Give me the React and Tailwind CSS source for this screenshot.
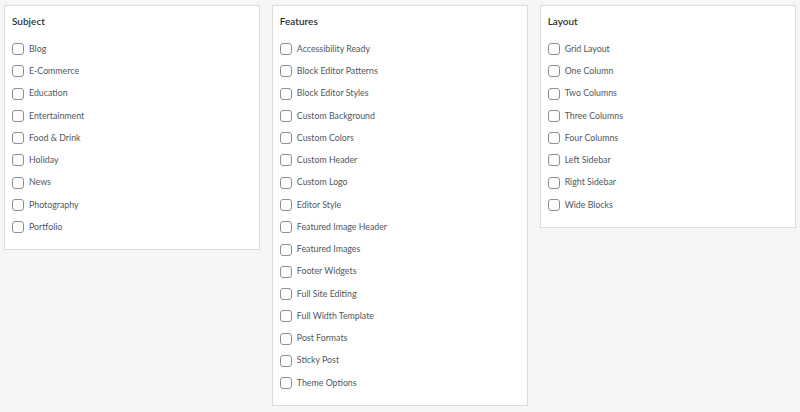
import React from "react";

const groups = [
  { title: "Subject", items: ["Blog", "E-Commerce", "Education", "Entertainment", "Food & Drink", "Holiday", "News", "Photography", "Portfolio"] },
  { title: "Features", items: ["Accessibility Ready", "Block Editor Patterns", "Block Editor Styles", "Custom Background", "Custom Colors", "Custom Header", "Custom Logo", "Editor Style", "Featured Image Header", "Featured Images", "Footer Widgets", "Full Site Editing", "Full Width Template", "Post Formats", "Sticky Post", "Theme Options"] },
  { title: "Layout", items: ["Grid Layout", "One Column", "Two Columns", "Three Columns", "Four Columns", "Left Sidebar", "Right Sidebar", "Wide Blocks"] },
];

export default function App() {
  return (
    <div className="w-[800px] h-[412px] bg-[#f6f6f6] px-[4px] pt-[5px] grid grid-cols-3 gap-[11.5px] items-start" style={{ fontFamily: 'Lato, "Open Sans", sans-serif' }}>
      {groups.map((g) => (
        <div key={g.title} className="bg-white border border-[#dcdcde] pl-[7px] pt-[8px] pb-[11px]">
          <div className="text-[10px] font-semibold text-[#2c3338] leading-[14px] mb-[10px]">{g.title}</div>
          <div className="flex flex-col">
            {g.items.map((it) => (
              <label key={it} className="flex items-center h-[22.27px] gap-[5px]">
                <span className="w-[12px] h-[12px] border border-[#8c8f94] rounded-[3px] bg-white shrink-0" />
                <span className="text-[8.8px] text-[#50575e] leading-none">{it}</span>
              </label>
            ))}
          </div>
        </div>
      ))}
    </div>
  );
}
